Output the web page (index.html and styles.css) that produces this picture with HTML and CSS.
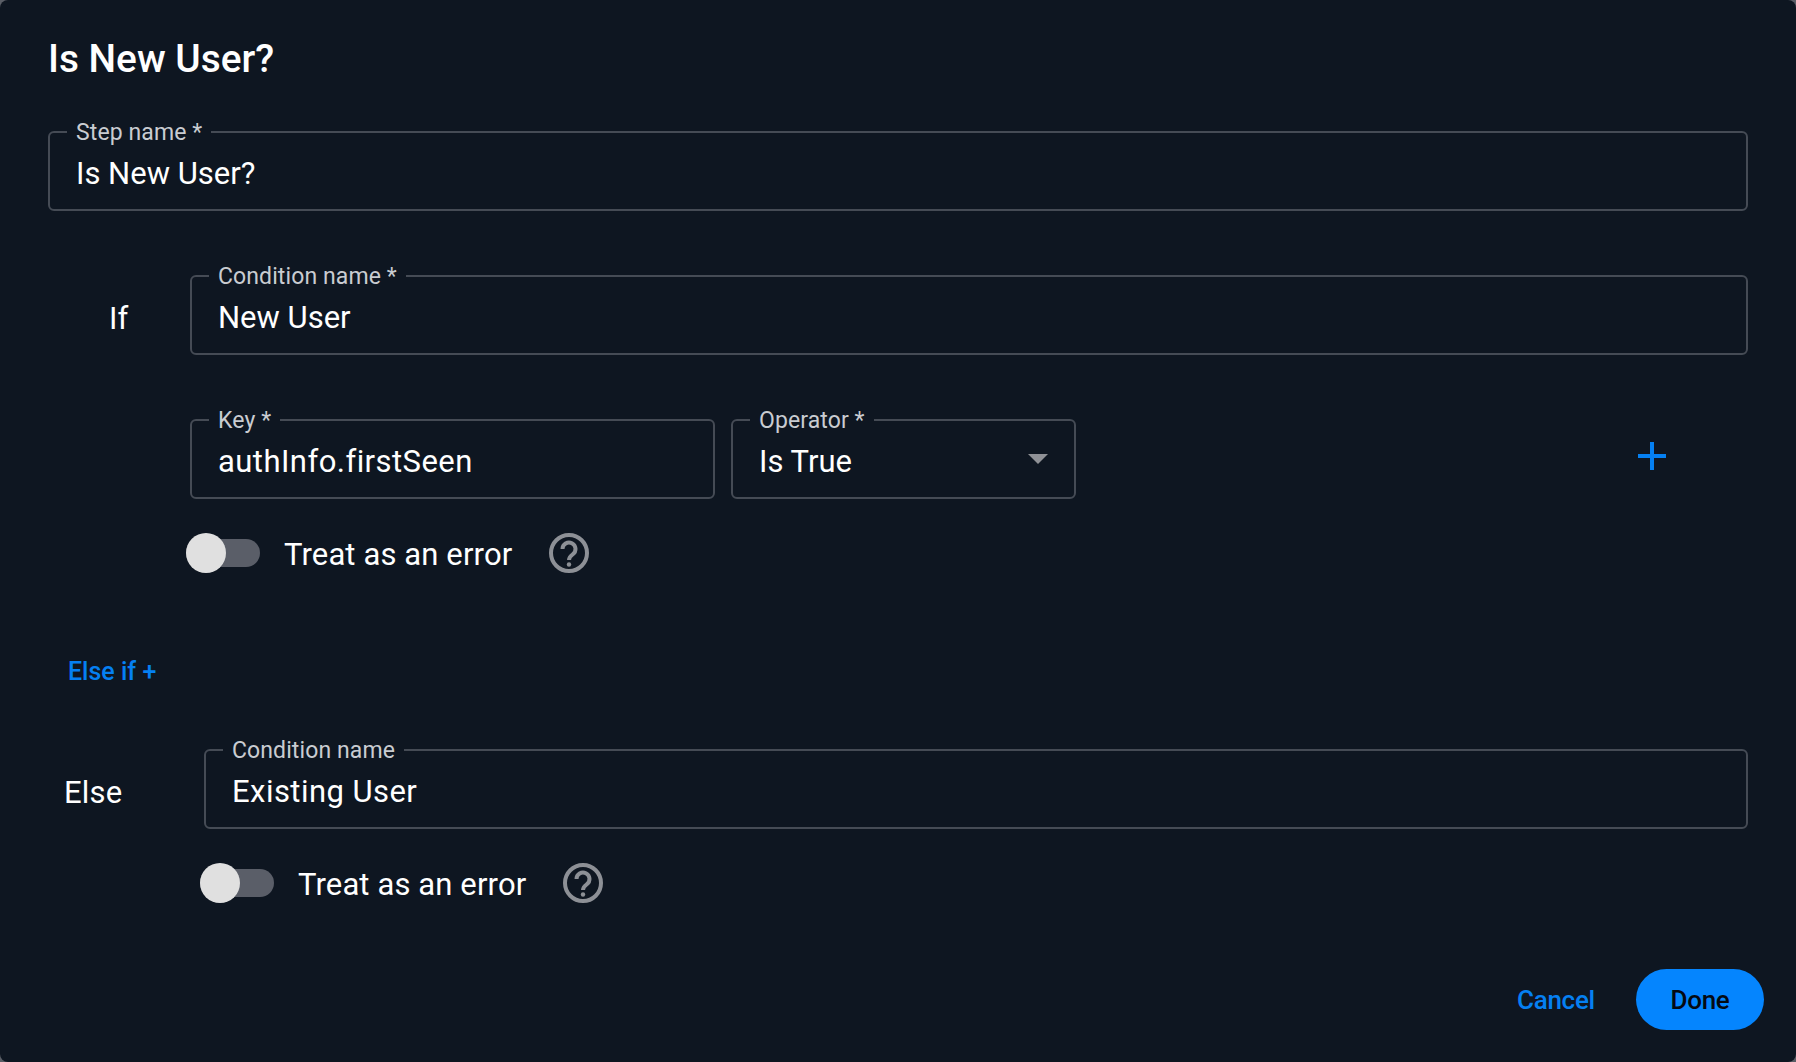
FILE: index.html
```html
<!DOCTYPE html>
<html lang="en">
<head>
<meta charset="utf-8">
<title>Is New User?</title>
<link rel="stylesheet" href="styles.css">
</head>
<body>
<main class="dialog">
  <h1 class="title">Is New User?</h1>

  <fieldset class="field field-step">
    <legend>Step name *</legend>
    <div class="value">Is New User?</div>
  </fieldset>

  <section class="branch branch-if">
    <div class="branch-label if-label">If</div>
    <fieldset class="field grow">
      <legend>Condition name *</legend>
      <div class="value">New User</div>
    </fieldset>
  </section>

  <section class="rule">
    <fieldset class="field key">
      <legend>Key *</legend>
      <div class="value value-wide">authInfo.firstSeen</div>
    </fieldset>
    <fieldset class="field operator">
      <legend>Operator *</legend>
      <div class="value select">Is True<span class="caret"></span></div>
    </fieldset>
    <svg class="plus" viewBox="0 0 28 28" aria-hidden="true"><path d="M14 0v28M0 14h28"/></svg>
  </section>

  <div class="toggle-row toggle-if">
    <span class="switch"><span class="knob"></span></span>
    <span class="toggle-text">Treat as an error</span>
    <svg class="help" viewBox="0 0 40 40" aria-hidden="true"><circle cx="20" cy="20" r="18"/><path d="M13.5 16a6.5 6.5 0 1 1 10.4 5.2c-2.4 1.8-3.9 2.9-3.9 5.8"/><circle class="dot" cx="20" cy="31.5" r="2.2"/></svg>
  </div>

  <a class="else-if">Else if +</a>

  <section class="branch branch-else">
    <div class="branch-label else-label">Else</div>
    <fieldset class="field grow">
      <legend>Condition name</legend>
      <div class="value value-wide">Existing User</div>
    </fieldset>
  </section>

  <div class="toggle-row toggle-else">
    <span class="switch"><span class="knob"></span></span>
    <span class="toggle-text">Treat as an error</span>
    <svg class="help" viewBox="0 0 40 40" aria-hidden="true"><circle cx="20" cy="20" r="18"/><path d="M13.5 16a6.5 6.5 0 1 1 10.4 5.2c-2.4 1.8-3.9 2.9-3.9 5.8"/><circle class="dot" cx="20" cy="31.5" r="2.2"/></svg>
  </div>

  <footer class="actions">
    <a class="cancel">Cancel</a>
    <button class="done">Done</button>
  </footer>
</main>
</body>
</html>
```
FILE: styles.css
```css
* { box-sizing: border-box; }
html, body { margin: 0; height: 100%; background: #5a5e66; }
body { font-family: Roboto, "Liberation Sans", sans-serif; color: #fff; }
.dialog {
  width: 1796px; height: 1062px; background: #0e1621; border-radius: 8px;
  padding: 37px 48px 0 48px; display: flex; flex-direction: column; overflow: hidden;
}
.title { margin: 0; font-size: 38.8px; line-height: 44px; font-weight: 500; color: #fff; }
.field {
  margin: 0; padding: 0 26px; border: 2px solid #454b55; border-radius: 6px; height: 94px; min-width: 0;
}
.field legend { padding: 2px 9px 0; margin-left: -9px; font-size: 23px; line-height: 28px; letter-spacing: 0.1px; color: #c9ccd1; }
.value { font-size: 31px; line-height: 44px; color: #fff; margin-top: 5px; }
.value-wide { letter-spacing: 0.45px; }
.field-step { margin-top: 36px; }
.branch { display: flex; align-items: flex-end; }
.grow { flex: 1; }
.branch-label { font-size: 31px; line-height: 44px; }
.branch-if { margin-top: 50px; }
.if-label { width: 142px; padding-left: 61px; padding-bottom: 14px; }
.branch-else { margin-top: 43px; }
.else-label { width: 156px; padding-left: 16px; padding-bottom: 14px; letter-spacing: 0.2px; }
.rule { display: flex; align-items: flex-end; margin-top: 50px; margin-left: 142px; gap: 16px; }
.key { width: 525px; }
.operator { width: 345px; }
.select { position: relative; }
.caret {
  position: absolute; right: 0; top: 14px; width: 0; height: 0;
  border-left: 10px solid transparent; border-right: 10px solid transparent; border-top: 10px solid #8f9196;
}
.plus { width: 28px; height: 28px; margin: 0 0 29px 546px; fill: none; stroke: #0580f2; stroke-width: 4; }
.toggle-row { display: flex; align-items: center; height: 40px; }
.toggle-if { margin-top: 34px; margin-left: 138px; }
.toggle-else { margin-top: 34px; margin-left: 152px; }
.switch { position: relative; width: 74px; height: 28px; border-radius: 14px; background: #5a5e68; flex: none; }
.knob {
  position: absolute; left: 0; top: -6px; width: 40px; height: 40px; border-radius: 50%; background: #e0e0e0;
}
.toggle-text { margin-left: 24px; padding-top: 4px; font-size: 31px; line-height: 40px; letter-spacing: 0.12px; color: #fff; }
.help { width: 40px; height: 40px; margin-left: 37px; fill: none; stroke: #8d9096; stroke-width: 4; flex: none; }
.help .dot { fill: #8d9096; stroke: none; }
.else-if { margin-top: 79px; margin-left: 20px; font-size: 25px; line-height: 40px; font-weight: 500; color: #0580f2; }
.actions { margin-top: auto; margin-bottom: 32px; margin-right: -16px; display: flex; justify-content: flex-end; align-items: center; }
.cancel { font-size: 26px; font-weight: 500; color: #0580f2; letter-spacing: -0.25px; }
.done {
  margin-left: 41px; width: 128px; height: 61px; border: 0; border-radius: 31px; background: #0585fe;
  font-family: inherit; font-size: 26px; font-weight: 500; letter-spacing: -0.3px; color: #050a12;
}
```
